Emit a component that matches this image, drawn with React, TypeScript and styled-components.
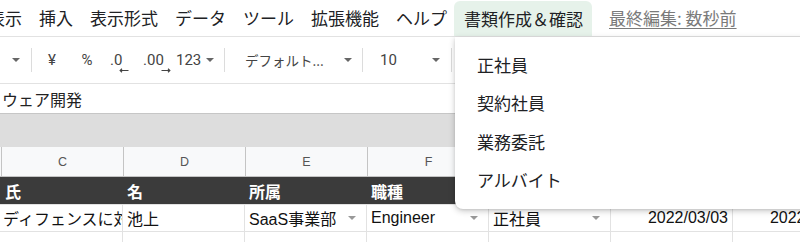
import styled, { createGlobalStyle } from 'styled-components';

const GlobalStyle = createGlobalStyle`
  html, body {
    margin: 0;
    padding: 0;
    background: #fff;
    overflow: hidden;
  }
  body {
    font-family: "Noto Sans CJK JP", sans-serif;
    color: #222;
  }
`;

const Page = styled.div`
  position: relative;
  width: 800px;
  height: 242px;
  overflow: hidden;
`;

const MenuBar = styled.div`
  height: 36px;
  display: flex;
  align-items: center;
  gap: 17px;
  border-bottom: 1px solid #e2e2e2;
  font-size: 17px;
  white-space: nowrap;
`;

const MenuItem = styled.div`
  color: #202124;
  line-height: 36px;
  &:first-child {
    margin-left: -12px;
  }
`;

const ActiveTab = styled.div`
  align-self: flex-end;
  height: 35px;
  line-height: 35px;
  margin-left: -10px;
  padding: 0 9px 0 10px;
  background: #e6f2ea;
  border-radius: 6px 6px 0 0;
  color: #202124;
`;

const LastEdit = styled.div`
  color: #7a7a7a;
  text-decoration: underline;
  text-underline-offset: 3px;
  line-height: 36px;
`;

const Toolbar = styled.div`
  height: 46px;
  display: flex;
  align-items: center;
  padding-left: 8px;
  border-bottom: 1px solid #e2e2e2;
  font-family: Roboto, "Noto Sans CJK JP", sans-serif;
  font-size: 15px;
  color: #444;
`;

const ToolBtn = styled.div<{ $w: number; $pl?: number; $center?: boolean }>`
  width: ${(p) => p.$w}px;
  padding-left: ${(p) => p.$pl ?? 0}px;
  box-sizing: border-box;
  display: flex;
  align-items: center;
  justify-content: ${(p) => (p.$center ? 'center' : 'flex-start')};
  white-space: nowrap;
`;

const Sep = styled.div<{ $ml: number }>`
  width: 1px;
  height: 24px;
  margin-left: ${(p) => p.$ml}px;
  background: #dcdcdc;
`;

const Caret = styled.span<{ $ml?: number; $color?: string }>`
  display: inline-block;
  flex-shrink: 0;
  width: 0;
  height: 0;
  margin-left: ${(p) => p.$ml ?? 0}px;
  border-left: 4px solid transparent;
  border-right: 4px solid transparent;
  border-top: 4px solid ${(p) => p.$color ?? '#666'};
`;

const DecimalIcon = styled.span`
  display: inline-flex;
  flex-direction: column;
  align-items: flex-end;
  line-height: 13px;
  margin-top: 6px;
  svg {
    margin-right: -7px;
    margin-top: 1px;
  }
`;

const FontName = styled.span`
  font-family: "Noto Sans CJK JP", sans-serif;
  font-size: 13.5px;
  color: #444;
`;

const FormulaBar = styled.div`
  height: 29px;
  display: flex;
  align-items: center;
  padding-left: 2px;
  font-size: 16px;
  color: #222;
  border-bottom: 1px solid #c6c6c6;
`;

const GrayBand = styled.div`
  height: 33px;
  background: #dddddd;
`;

const Row = styled.div<{ $h: number; $bg: string; $border: string }>`
  display: grid;
  grid-template-columns: repeat(7, 122px);
  padding-left: 1px;
  height: ${(p) => p.$h}px;
  background: ${(p) => p.$bg};
  border-bottom: 1px solid ${(p) => p.$border};
`;

const ColHead = styled.div`
  border-left: 1px solid #c4c4c4;
  display: flex;
  align-items: center;
  justify-content: center;
  font-family: "Liberation Sans", Arial, sans-serif;
  font-size: 12.5px;
  color: #555;
`;

const HeadCell = styled.div`
  display: flex;
  align-items: center;
  padding-left: 4px;
  font-size: 16px;
  font-weight: 700;
  color: #fff;
`;

const Cell = styled.div<{ $right?: boolean }>`
  display: flex;
  align-items: center;
  justify-content: ${(p) => (p.$right ? 'flex-end' : 'space-between')};
  padding: 0 ${(p) => (p.$right ? 4 : 10)}px 0 4px;
  border-right: 1px solid #e2e2e2;
  overflow: hidden;
  white-space: nowrap;
  font-family: "Liberation Sans", Arial, "Noto Sans CJK JP", sans-serif;
  font-size: 16px;
  color: #111;
  &:first-child {
    padding-left: 2px;
    justify-content: flex-start;
  }
`;

const Dropdown = styled.div`
  position: absolute;
  left: 455px;
  top: 37px;
  width: 380px;
  padding: 8px 0 10px;
  background: #fff;
  border-radius: 0 0 0 8px;
  box-shadow: 0 2px 6px rgba(0, 0, 0, 0.22), 0 1px 2px rgba(0, 0, 0, 0.08);
  z-index: 10;
`;

const DropItem = styled.div`
  height: 38.5px;
  display: flex;
  align-items: center;
  padding-left: 22px;
  font-size: 17px;
  color: #202124;
`;

const Arrow = ({ dir }: { dir: 'left' | 'right' }) => (
  <svg width="10" height="5" viewBox="0 0 10 5">
    {dir === 'left' ? (
      <path d="M9.5 2.5H1.5M3 0.8L1.2 2.5L3 4.2" stroke="#444" strokeWidth="1.2" fill="none" />
    ) : (
      <path d="M0.5 2.5H8.5M7 0.8L8.8 2.5L7 4.2" stroke="#444" strokeWidth="1.2" fill="none" />
    )}
  </svg>
);

const menus = ['表示', '挿入', '表示形式', 'データ', 'ツール', '拡張機能', 'ヘルプ'];
const columns = ['C', 'D', 'E', 'F', 'G', 'H', 'I'];
const headers = ['氏', '名', '所属', '職種', '', '', ''];
const options = ['正社員', '契約社員', '業務委託', 'アルバイト'];

export default function App() {
  return (
    <Page>
      <GlobalStyle />
      <MenuBar>
        {menus.map((m) => (
          <MenuItem key={m}>{m}</MenuItem>
        ))}
        <ActiveTab>書類作成＆確認</ActiveTab>
        <LastEdit>最終編集: 数秒前</LastEdit>
      </MenuBar>

      <Toolbar>
        <ToolBtn $w={16} $center>
          <Caret />
        </ToolBtn>
        <Sep $ml={7} />
        <ToolBtn $w={40} $center>¥</ToolBtn>
        <ToolBtn $w={30} $center>%</ToolBtn>
        <ToolBtn $w={34} $pl={8}>
          <DecimalIcon>
            <span>.0</span>
            <Arrow dir="left" />
          </DecimalIcon>
        </ToolBtn>
        <ToolBtn $w={36} $pl={7}>
          <DecimalIcon>
            <span>.00</span>
            <Arrow dir="right" />
          </DecimalIcon>
        </ToolBtn>
        <ToolBtn $w={44} $pl={4}>
          123
          <Caret $ml={5} />
        </ToolBtn>
        <Sep $ml={8} />
        <ToolBtn $w={131} $pl={20}>
          <FontName>デフォルト...</FontName>
          <Caret $ml={20} />
        </ToolBtn>
        <Sep $ml={6} />
        <ToolBtn $w={82} $pl={17}>
          10
          <Caret $ml={35} />
        </ToolBtn>
        <Sep $ml={6} />
      </Toolbar>

      <FormulaBar>ウェア開発</FormulaBar>
      <GrayBand />

      <Row $h={29} $bg="#f8f9fa" $border="#c4c4c4">
        {columns.map((c) => (
          <ColHead key={c}>{c}</ColHead>
        ))}
      </Row>

      <Row $h={27} $bg="#3b3b3b" $border="#e2e2e2">
        {headers.map((h, i) => (
          <HeadCell key={i}>{h}</HeadCell>
        ))}
      </Row>

      <Row $h={26} $bg="#fff" $border="#e2e2e2">
        <Cell>ディフェンスに対応</Cell>
        <Cell>池上</Cell>
        <Cell>
          SaaS事業部
          <Caret $color="#999" />
        </Cell>
        <Cell>
          Engineer
          <Caret $color="#999" />
        </Cell>
        <Cell>
          正社員
          <Caret $color="#999" />
        </Cell>
        <Cell $right>2022/03/03</Cell>
        <Cell $right>2022/03/03</Cell>
      </Row>

      <Row $h={20} $bg="#fff" $border="#e2e2e2">
        {columns.map((c) => (
          <Cell key={c} />
        ))}
      </Row>

      <Dropdown>
        {options.map((o) => (
          <DropItem key={o}>{o}</DropItem>
        ))}
      </Dropdown>
    </Page>
  );
}
